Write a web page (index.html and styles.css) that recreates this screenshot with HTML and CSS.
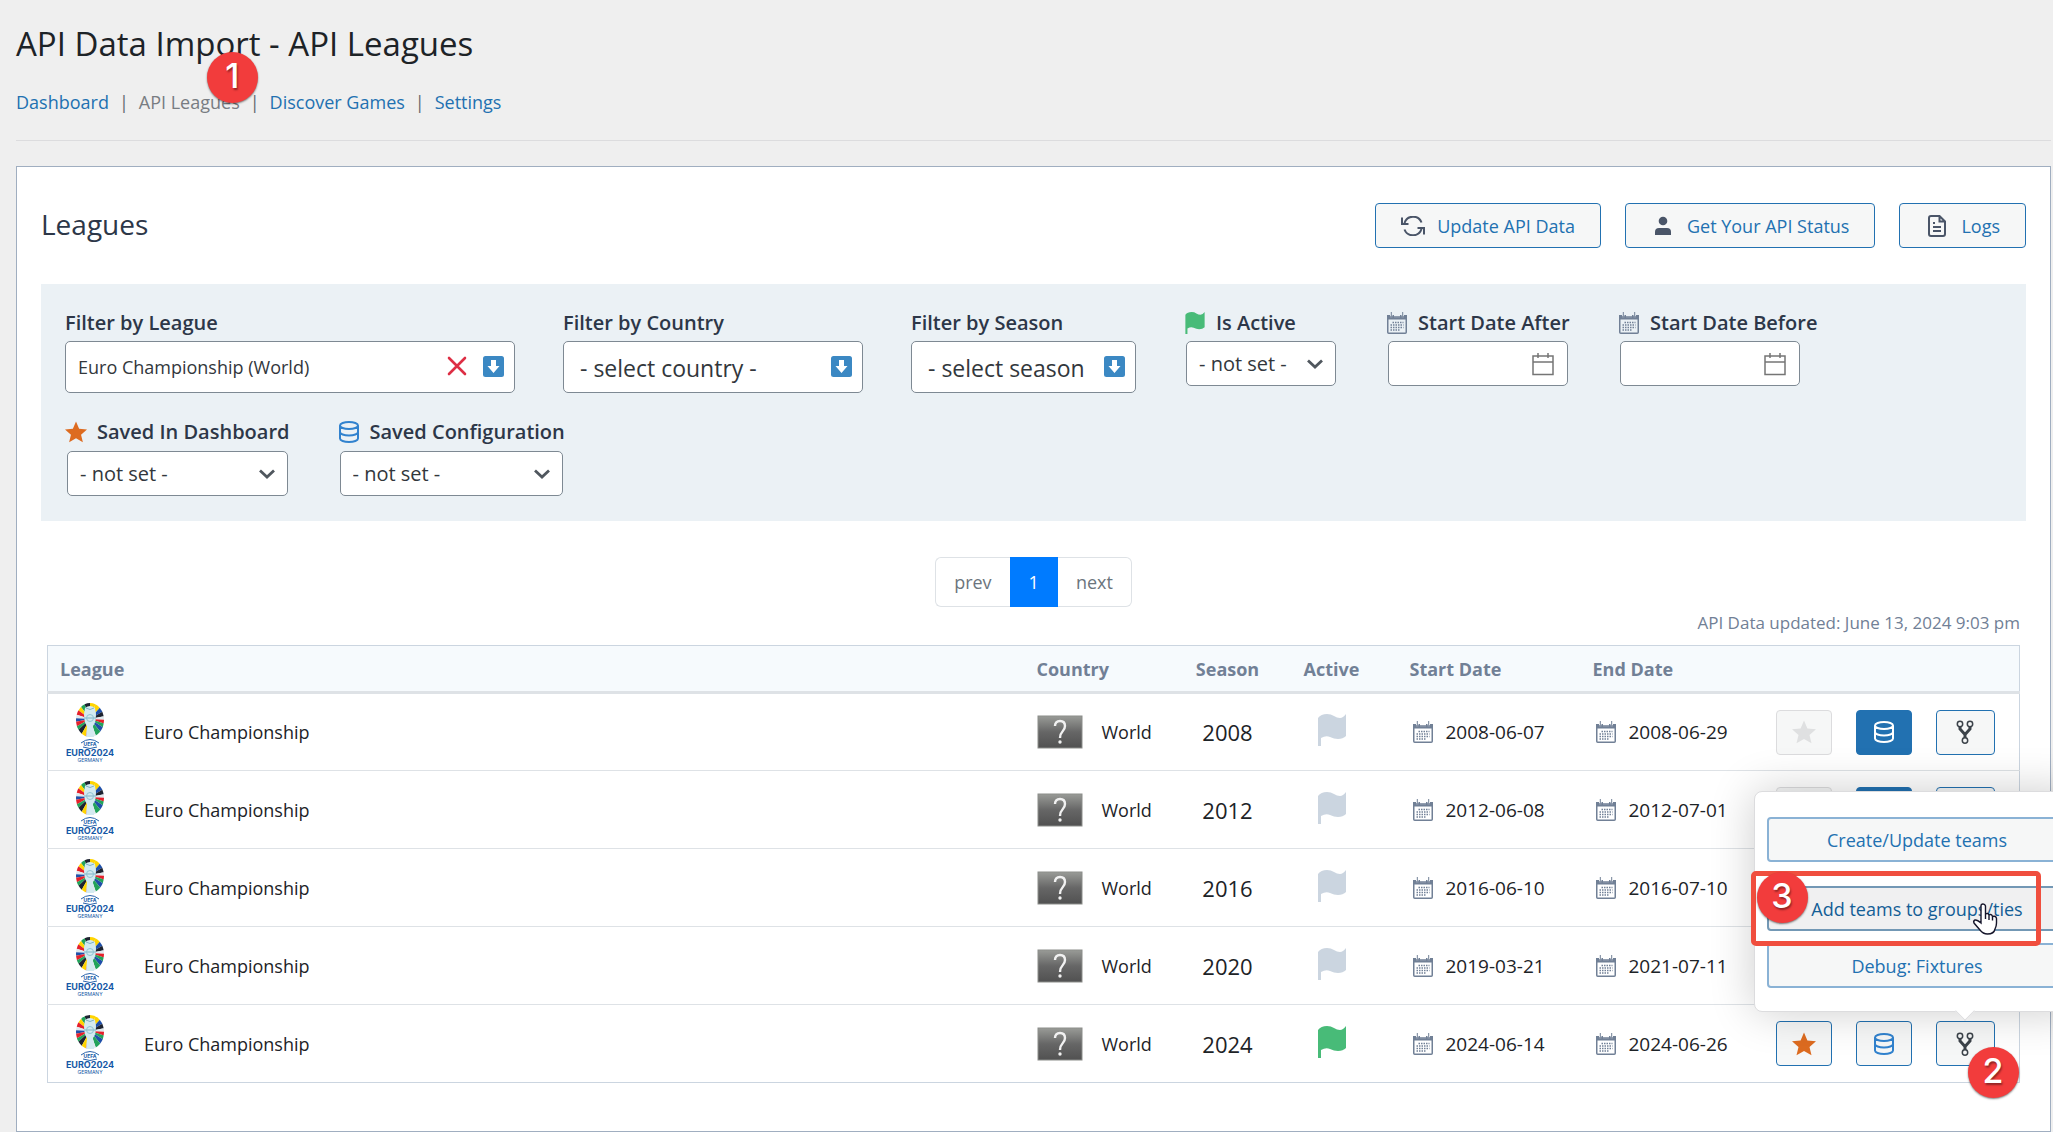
FILE: index.html
```html
<!DOCTYPE html>
<html lang="en">
<head>
  <meta charset="UTF-8" />
  <meta name="viewport" content="width=device-width, initial-scale=1.0"/>
  <title>API Data Import - API Leagues</title>
  <link rel="stylesheet" href="styles.css">
</head>
<body>
  <!-- Icon set -->
  <svg class="sprite" aria-hidden="true">
    <symbol id="i-sync" viewBox="0 0 24 20">
      <path d="M3.5 7A9 9 0 0 1 20.500 6.500M20.500 13A9 9 0 0 1 3.500 13.500" fill="none" stroke="currentColor" stroke-width="2"/>
      <path d="M1 1.500V8H7.500M23 18.500V12H16.500" fill="none" stroke="currentColor" stroke-width="2"/>
    </symbol>
    <symbol id="i-user" viewBox="0 0 18 20">
      <circle cx="9" cy="5" r="4.300" fill="currentColor"/>
      <path d="M1 19V16q0-4 4-4h8q4 0 4 4v3z" fill="currentColor"/>
    </symbol>
    <symbol id="i-file" viewBox="0 0 20 24">
      <path d="M12.500 2H4Q2 2 2 4V20Q2 22 4 22H16Q18 22 18 20V7.500zM12.500 2V7.500H18" fill="none" stroke="currentColor" stroke-width="2"/>
      <path d="M6 9H8M6 13H14M6 17H14" stroke="currentColor" stroke-width="2"/>
    </symbol>
    <symbol id="i-cal" viewBox="0 0 20 22">
      <path d="M0 3H3V5.500H5.500V3H7V5.500H13V3H14.500V5.500H17V3H20V7.500H0z" fill="currentColor"/>
      <path d="M4.300 0V4.500M15.700 0V4.500" stroke="currentColor"/>
      <rect x="0.750" y="5" width="18.500" height="16.250" rx="1" fill="none" stroke="currentColor" stroke-width="1.500"/>
      <path d="M5.500 10.500H16.500M3.500 13H16.500M3.500 15.500H16.500M3.500 18H13" stroke="currentColor" stroke-width="1.500" stroke-dasharray="1.500 1"/>
    </symbol>
    <symbol id="i-date" viewBox="0 0 24 24">
      <path d="M2 4H22V22.500H2zM2 10H22M7 1V6M17 1V6" fill="none" stroke="currentColor" stroke-width="1.500"/>
    </symbol>
    <symbol id="i-flag" viewBox="0 0 28 32">
      <path d="M0 4Q3 0 9 0Q13 0 16 2T22 4Q25 4 28 0V22Q25 25 20 25Q16 25 12 23T3 24V32H0z" fill="currentColor"/>
    </symbol>
    <symbol id="i-star" viewBox="0 0 24 24">
      <path d="M12 .5L15.400 8.400 24 9.200 17.500 14.900 19.500 23.300 12 18.900 4.500 23.300 6.500 14.900 0 9.200 8.600 8.400z" fill="currentColor"/>
    </symbol>
    <symbol id="i-db" viewBox="0 0 20 22">
      <path d="M1 4.500C1 2.500 5 1 10 1S19 2.500 19 4.500 15 8 10 8 1 6.500 1 4.500zV17.500C1 19.500 5 21 10 21S19 19.500 19 17.500V4.500M1 11C1 13 5 14.500 10 14.500S19 13 19 11" fill="none" stroke="currentColor" stroke-width="2"/>
    </symbol>
    <symbol id="i-fork" viewBox="0 0 18 24">
      <g fill="none" stroke="currentColor">
        <circle cx="4" cy="4" r="2.700" stroke-width="1.500"/>
        <circle cx="14" cy="4" r="2.700" stroke-width="1.500"/>
        <circle cx="9" cy="20.500" r="2.700" stroke-width="1.500"/>
        <path d="M4 7V9L9 14.500 14 9V7M9 14V18" stroke-width="3"/>
      </g>
    </symbol>
    <symbol id="i-down" viewBox="0 0 21 21">
      <rect width="21" height="21" rx="2.500" fill="#3b88c3"/>
      <path d="M8 4H13V10H16.500L10.500 17 4.500 10H8z" fill="#fff"/>
    </symbol>
    <symbol id="i-cross" viewBox="0 0 20 20">
      <path d="M2 2L18 18M18 2L2 18" stroke="#dd2e44" stroke-width="2.600" stroke-linecap="round"/>
    </symbol>
    <symbol id="i-chevron" viewBox="0 0 16 10">
      <path d="M1 1.500L8 8 15 1.500" fill="none" stroke="#50575e" stroke-width="2.800"/>
    </symbol>
    <symbol id="i-hand" viewBox="0 0 26 32">
      <path d="M9 19V3Q9 1 11 1T13.500 3V11Q16 9.500 17 12Q19.500 10.500 20.500 13.500Q24 12.500 24.500 15.500V20Q24.500 23 23 26Q22 31 15.500 31Q11 31 8 27L2 20Q1 18 3 17Q5 16.500 9 20zM13.500 11V16M17 12V17M20.500 13.500V17.500" fill="#fff" stroke="#15152a" stroke-width="1.400"/>
    </symbol>
    <clipPath id="ring"><ellipse cx="24" cy="18" rx="14" ry="17"/></clipPath>
    <symbol id="i-euro" viewBox="0 0 48 60">
      <g clip-path="url(#ring)">
        <path d="M24 17L24-3 31-2z" fill="#ffd400"/>
        <path d="M24 17L31-2 37 2z" fill="#ffd400"/>
        <path d="M24 17L37 2 41 7z" fill="#1f4fa8"/>
        <path d="M24 17L41 7 44 13z" fill="#1d2330"/>
        <path d="M24 17L44 13 44 18z" fill="#dfe9ee"/>
        <path d="M24 17L44 18 43 23z" fill="#e5202b"/>
        <path d="M24 17L43 23 41 28z" fill="#22a35a"/>
        <path d="M24 17L41 28 37 33z" fill="#1f4fa8"/>
        <path d="M24 17L37 33 31 37z" fill="#22a35a"/>
        <path d="M24 17L31 37H24z" fill="#dfe9ee"/>
        <path d="M24 17L24-3 17-2z" fill="#1d2330"/>
        <path d="M24 17L17-2 12 1z" fill="#22a35a"/>
        <path d="M24 17L12 1 8 5z" fill="#ffd400"/>
        <path d="M24 17L8 5 5 11z" fill="#e5202b"/>
        <path d="M24 17L5 11 4 16z" fill="#dfe9ee"/>
        <path d="M24 17L4 16 4 21z" fill="#1f4fa8"/>
        <path d="M24 17L4 21 6 27z" fill="#e5202b"/>
        <path d="M24 17L6 27 9 31z" fill="#22a35a"/>
        <path d="M24 17L9 31 14 35z" fill="#1d2330"/>
        <path d="M24 17L14 35 19 37z" fill="#ffd400"/>
        <path d="M24 17L19 37H24z" fill="#e5202b"/>
      </g>
      <path d="M19 6Q24 2 29 6L30 12Q30 21 27 24L28 35H20L21 24Q18 21 18 12z" fill="#d3eaf0"/>
      <path d="M20 6Q24 9 28 6M18 16H30" fill="none" stroke="#7fb2c4"/>
      <circle cx="24" cy="16" r="3.500" fill="none" stroke="#8fc4d4"/>
      <path d="M15 41Q24 34 33 41M17 45Q24 48 31 45" fill="none" stroke="#2a63ab"/>
    </symbol>
    <linearGradient id="grey" x2="0" y2="1">
      <stop offset="0" stop-color="#999b97"/>
      <stop offset=".5" stop-color="#666"/>
      <stop offset="1" stop-color="#515151"/>
    </linearGradient>
    <symbol id="i-world" viewBox="0 0 46 34">
      <rect x="1" y="1" width="44" height="32" fill="url(#grey)" stroke="#8b8d8a"/>
      <path d="M18 11Q18 6 23 6T28 11Q28 14 25.500 16.500T23 23" fill="none" stroke="#f1f1f1" stroke-width="2.400"/>
      <circle cx="23" cy="27" r="1.700" fill="#f1f1f1"/>
    </symbol>
  </svg>

  <header>
    <h1>API Data Import - API Leagues</h1>
    <nav class="top-nav">
      <a href="#">Dashboard</a>
      <span>|</span>
      <a href="#" class="current">API Leagues<b class="badge badge-nav">1</b></a>
      <span>|</span>
      <a href="#">Discover Games</a>
      <span>|</span>
      <a href="#">Settings</a>
    </nav>
  </header>

  <main class="panel">
    <div class="toolbar">
      <h2>Leagues</h2>
      <button class="btn"><svg class="ic-sync"><use href="#i-sync"/></svg>Update API Data</button>
      <button class="btn"><svg class="ic-user"><use href="#i-user"/></svg>Get Your API Status</button>
      <button class="btn"><svg class="ic-file"><use href="#i-file"/></svg>Logs</button>
    </div>

    <form class="filters">
      <div class="filter">
        <label for="league">Filter by League</label>
        <div class="field field-league">
          <input type="text" id="league" value="Euro Championship (World)">
          <div class="field-icons">
            <svg class="ic-20"><use href="#i-cross"/></svg>
            <svg class="ic-21"><use href="#i-down"/></svg>
          </div>
        </div>
      </div>
      <div class="filter">
        <label for="country">Filter by Country</label>
        <div class="field field-country">
          <select id="country"><option>- select country -</option></select>
          <div class="field-icons"><svg class="ic-21"><use href="#i-down"/></svg></div>
        </div>
      </div>
      <div class="filter">
        <label for="season">Filter by Season</label>
        <div class="field field-season">
          <select id="season"><option>- select season</option></select>
          <div class="field-icons"><svg class="ic-21"><use href="#i-down"/></svg></div>
        </div>
      </div>
      <div class="filter">
        <label for="active"><svg class="ic-label green"><use href="#i-flag"/></svg>Is Active</label>
        <div class="field small field-active">
          <select id="active"><option>- not set -</option></select>
          <div class="field-icons"><svg class="ic-chevron"><use href="#i-chevron"/></svg></div>
        </div>
      </div>
      <div class="filter">
        <label for="after"><svg class="ic-label slate"><use href="#i-cal"/></svg>Start Date After</label>
        <div class="field small field-date">
          <input type="text" id="after">
          <div class="field-icons"><svg class="ic-date"><use href="#i-date"/></svg></div>
        </div>
      </div>
      <div class="filter">
        <label for="before"><svg class="ic-label slate"><use href="#i-cal"/></svg>Start Date Before</label>
        <div class="field small field-date">
          <input type="text" id="before">
          <div class="field-icons"><svg class="ic-date"><use href="#i-date"/></svg></div>
        </div>
      </div>
      <div class="filter">
        <label for="saved"><svg class="ic-label orange"><use href="#i-star"/></svg>Saved In Dashboard</label>
        <div class="field small field-saved">
          <select id="saved"><option>- not set -</option></select>
          <div class="field-icons"><svg class="ic-chevron"><use href="#i-chevron"/></svg></div>
        </div>
      </div>
      <div class="filter">
        <label for="config"><svg class="ic-label blue"><use href="#i-db"/></svg>Saved Configuration</label>
        <div class="field small field-saved">
          <select id="config"><option>- not set -</option></select>
          <div class="field-icons"><svg class="ic-chevron"><use href="#i-chevron"/></svg></div>
        </div>
      </div>
    </form>

    <div class="pagination">
      <button>prev</button>
      <button class="current-page">1</button>
      <button>next</button>
    </div>

    <p class="updated">API Data updated: June 13, 2024 9:03 pm</p>

    <table class="leagues">
      <thead>
        <tr>
          <th>League</th>
          <th class="col-country">Country</th>
          <th class="col-season">Season</th>
          <th class="col-active">Active</th>
          <th class="col-date">Start Date</th>
          <th class="col-date">End Date</th>
          <th class="col-actions"></th>
        </tr>
      </thead>
      <tbody id="leagueRows"></tbody>
    </table>
  </main>

  <template id="menuTemplate">
    <div class="popover">
      <button class="btn">Create/Update teams</button>
      <button class="btn hovered">Add teams to groups/ties</button>
      <button class="btn">Debug: Fixtures</button>
      <div class="marker"></div>
      <b class="badge badge-menu">3</b>
      <svg class="pointer"><use href="#i-hand"/></svg>
    </div>
    <b class="badge badge-fork">2</b>
  </template>

  <script>
    const seasons = [
      { year: 2008, start: '2008-06-07', end: '2008-06-29' },
      { year: 2012, start: '2012-06-08', end: '2012-07-01' },
      { year: 2016, start: '2016-06-10', end: '2016-07-10' },
      { year: 2020, start: '2019-03-21', end: '2021-07-11' },
      { year: 2024, start: '2024-06-14', end: '2024-06-26', active: true }
    ];

    const logo = `
      <svg class="ic-logo" viewBox="0 0 48 60">
        <use href="#i-euro"/>
        <text x="24" y="44" class="logo-uefa">UEFA</text>
        <text x="24" y="54" class="logo-name">EURO2024</text>
        <text x="24" y="60" class="logo-host">GERMANY</text>
      </svg>`;

    document.getElementById('leagueRows').innerHTML = seasons.map(s => `
      <tr>
        <td><div class="cell league">${logo}Euro Championship</div></td>
        <td><div class="cell country"><svg class="ic-world"><use href="#i-world"/></svg>World</div></td>
        <td class="col-season year">${s.year}</td>
        <td class="col-active"><svg class="ic-flag ${s.active ? 'green' : 'pale'}"><use href="#i-flag"/></svg></td>
        <td><div class="cell date"><svg class="ic-cal slate"><use href="#i-cal"/></svg>${s.start}</div></td>
        <td><div class="cell date"><svg class="ic-cal slate"><use href="#i-cal"/></svg>${s.end}</div></td>
        <td>
          <div class="cell actions">
            <button class="btn icon-btn" aria-label="Save in dashboard" ${s.active ? '' : 'disabled'}><svg class="ic-24 orange"><use href="#i-star"/></svg></button>
            <button class="btn icon-btn ${s.active ? '' : 'filled'}" aria-label="Configuration"><svg class="ic-db blue"><use href="#i-db"/></svg></button>
            <div class="menu-wrap">
              <button class="btn icon-btn fork" aria-label="More actions"><svg class="ic-fork"><use href="#i-fork"/></svg></button>
            </div>
          </div>
        </td>
      </tr>`).join('');

    // menu is open on the last season
    const wraps = document.querySelectorAll('.menu-wrap');
    wraps[wraps.length - 1].append(document.getElementById('menuTemplate').content);
  </script>
</body>
</html>
```
FILE: styles.css
```css
* {
  box-sizing: border-box;
}
body {
  margin: 0;
  padding: 14px 2px 0 16px;
  background: #efefef;
  font-family: 'Open Sans', 'Noto Sans', sans-serif;
  font-size: 18px;
  line-height: 26px;
  color: #1d2327;
  overflow: hidden auto;
}
button, input, select {
  font: inherit;
  color: inherit;
}
svg {
  display: block;
  flex: none;
}
.sprite {
  position: absolute;
  width: 0;
  height: 0;
}
header {
  height: 127px;
  border-bottom: 1px solid #dcdcde;
  margin-bottom: 25px;
}
h1 {
  margin: 0 0 15px;
  font-size: 33px;
  line-height: 60px;
  font-weight: 400;
}
.top-nav {
  display: flex;
  gap: 10px;
  color: #646970;
}
.top-nav a {
  position: relative;
  color: #2271b1;
  text-decoration: none;
}
.top-nav .current {
  color: #787c82;
}
.panel {
  background: #fff;
  border: 1px solid #a0aec0;
  padding: 36px 24px 48px;
}
.toolbar {
  display: flex;
  align-items: center;
  gap: 24px;
}
h2 {
  flex: 1;
  margin: 0;
  padding-bottom: 4px;
  font-size: 28px;
  line-height: 40px;
  font-weight: 400;
  color: #2d3748;
}
.btn {
  display: flex;
  align-items: center;
  justify-content: center;
  height: 45px;
  padding: 0 25px;
  border: 1px solid #2271b1;
  border-radius: 4px;
  background: #f6f7f7;
  color: #2271b1;
  cursor: pointer;
}
.toolbar .btn {
  gap: 12px;
}
.toolbar svg {
  color: #4a5568;
}

/* icon sizes */
.ic-sync { width: 24px; height: 20px; }
.ic-user { width: 24px; height: 20px; }
.ic-file { width: 24px; height: 24px; }
.ic-label { width: 22px; height: 22px; }
.ic-20 { width: 20px; height: 20px; }
.ic-21 { width: 21px; height: 21px; }
.ic-24 { width: 24px; height: 24px; }
.ic-db { width: 20px; height: 22px; }
.ic-date { width: 24px; height: 24px; }
.ic-chevron { width: 16px; height: 10px; }
.ic-logo { width: 48px; height: 60px; }
.ic-world { width: 46px; height: 34px; }
.ic-flag { width: 28px; height: 32px; margin: 0 auto 4px; }
.ic-cal { width: 26px; height: 22px; }
.ic-fork { width: 18px; height: 24px; color: #3c434a; }

/* icon colors */
.green { color: #48bb78; }
.pale { color: #cbd5e0; }
.slate { color: #718096; }
.orange { color: #dd6b20; }
.blue { color: #3182ce; }

.filters {
  display: flex;
  flex-wrap: wrap;
  align-items: flex-start;
  gap: 24px 48px;
  margin: 36px 0;
  padding: 24px 24px 25px;
  background: #ebf1f5;
}
.filter label {
  display: flex;
  align-items: center;
  gap: 10px;
  height: 33px;
  padding-bottom: 4px;
  font-size: 20px;
  font-weight: 600;
  color: #2d3748;
  white-space: nowrap;
}
.field {
  position: relative;
  height: 52px;
}
.field input, .field select {
  appearance: none;
  width: 100%;
  height: 100%;
  margin: 0;
  padding: 0 48px 0 12px;
  border: 1px solid #7e8993;
  border-radius: 5px;
  background: #fff;
  color: #32373c;
}
.field select {
  padding: 2px 48px 0 16px;
  font-size: 23px;
  line-height: 36px;
}
.small {
  height: 45px;
  margin: 0 2px;
}
.field.small select {
  padding: 0 30px 0 12px;
  font-size: 20px;
}
.field-icons {
  position: absolute;
  top: 0;
  right: 11px;
  height: 50px;
  display: flex;
  align-items: center;
  gap: 16px;
  pointer-events: none;
}
.small .field-icons {
  right: 13px;
  height: 100%;
  color: #757575;
}
.field-league { width: 450px; }
.field-country { width: 300px; }
.field-season { width: 225px; }
.field-active { width: 150px; }
.field-date { width: 180px; }
.field-saved { margin-top: 1px; }

.pagination {
  display: flex;
  justify-content: center;
}
.pagination button {
  height: 50px;
  padding: 0 18px;
  border: 1px solid #dee2e6;
  background: #fff;
  color: #6c757d;
}
.pagination button:first-child {
  border-right: 0;
  border-radius: 6px 0 0 6px;
}
.pagination button:last-child {
  border-left: 0;
  border-radius: 0 6px 6px 0;
}
.pagination .current-page {
  border-color: #007bff;
  background: #007bff;
  color: #fff;
}
.updated {
  margin: 0 6px;
  padding: 3px 0 9px;
  font-size: 17px;
  text-align: right;
  color: #718096;
}

.leagues {
  width: calc(100% - 12px);
  margin: 0 6px;
  border-collapse: collapse;
  table-layout: fixed;
  border: 1px solid #cbd5e0;
}
.leagues th {
  height: 47px;
  padding: 0 12px;
  border-bottom: 3px solid #dee2e6;
  background: #f6fafd;
  color: #718096;
  font-size: 18px;
  font-weight: 700;
  text-align: left;
}
.leagues td {
  height: 78px;
  padding: 0 12px;
  border-top: 1px solid #dee2e6;
}
.leagues .col-country { width: 165px; }
.leagues .col-season { width: 76px; padding: 0; text-align: center; }
.leagues .col-active { width: 132px; text-align: center; }
.leagues .col-date { width: 183px; }
.leagues .col-actions { width: 256px; }
.year {
  font-size: 22px;
}
.cell {
  display: flex;
  align-items: center;
}
.league {
  gap: 30px;
  padding-left: 6px;
}
.country {
  gap: 19px;
}
.date {
  gap: 10px;
  font-size: 19px;
}
.actions {
  gap: 24px;
}
.icon-btn {
  width: 56px;
  padding: 0;
}
.fork {
  width: 59px;
}
.icon-btn:disabled {
  border-color: #dcdcde;
}
.icon-btn:disabled svg {
  color: #dfe0e1;
}
.filled {
  background: #2271b1;
}
.filled svg {
  color: #fff;
}

/* open actions menu */
.menu-wrap {
  position: relative;
}
.popover {
  position: absolute;
  left: -182px;
  bottom: 54px;
  width: 327px;
  padding: 25px 12px 23px;
  border: 1px solid #dcdcde;
  border-radius: 8px;
  background: #fff;
  box-shadow: 0 0 45px rgba(0, 0, 0, 0.2);
}
.popover::after {
  content: '';
  position: absolute;
  left: 203px;
  bottom: -7px;
  width: 13px;
  height: 13px;
  background: #fff;
  border: solid #dcdcde;
  border-width: 0 1px 1px 0;
  transform: rotate(45deg);
}
.popover .btn {
  width: 100%;
  margin-bottom: 12px;
  border: 2px solid #8ab2d5;
}
.popover .btn:first-child {
  margin-bottom: 24px;
}
.popover .btn:nth-child(3) {
  margin-bottom: 0;
}
.popover .hovered {
  background: #f0f0f1;
  border-color: #7398b5;
  color: #135e96;
}
.marker {
  position: absolute;
  left: -4px;
  top: 79px;
  width: 290px;
  height: 75px;
  border: 5px solid #f04e3e;
  border-radius: 5px;
}
.pointer {
  position: absolute;
  left: 217px;
  top: 111px;
  width: 26px;
  height: 32px;
}
.badge {
  position: absolute;
  width: 51px;
  height: 51px;
  border-radius: 50%;
  background: #f23c3c;
  box-shadow: 0 1px 2px rgba(0, 0, 0, 0.5);
  color: #fff;
  font: 500 34px/48px Inter, Roboto, sans-serif;
  text-align: center;
  text-shadow: 1px 2px 2px rgba(0, 0, 0, 0.4);
}
.badge-nav {
  right: -18px;
  top: -37px;
}
.badge-menu {
  left: 2px;
  top: 80px;
}
.badge-fork {
  left: 32px;
  top: 26px;
}

.logo-uefa, .logo-name, .logo-host {
  font-family: Inter, sans-serif;
  text-anchor: middle;
  fill: #1558a6;
}
.logo-uefa { font-size: 5px; font-weight: 700; }
.logo-name { font-size: 9px; font-weight: 700; }
.logo-host { font-size: 5px; }
```
